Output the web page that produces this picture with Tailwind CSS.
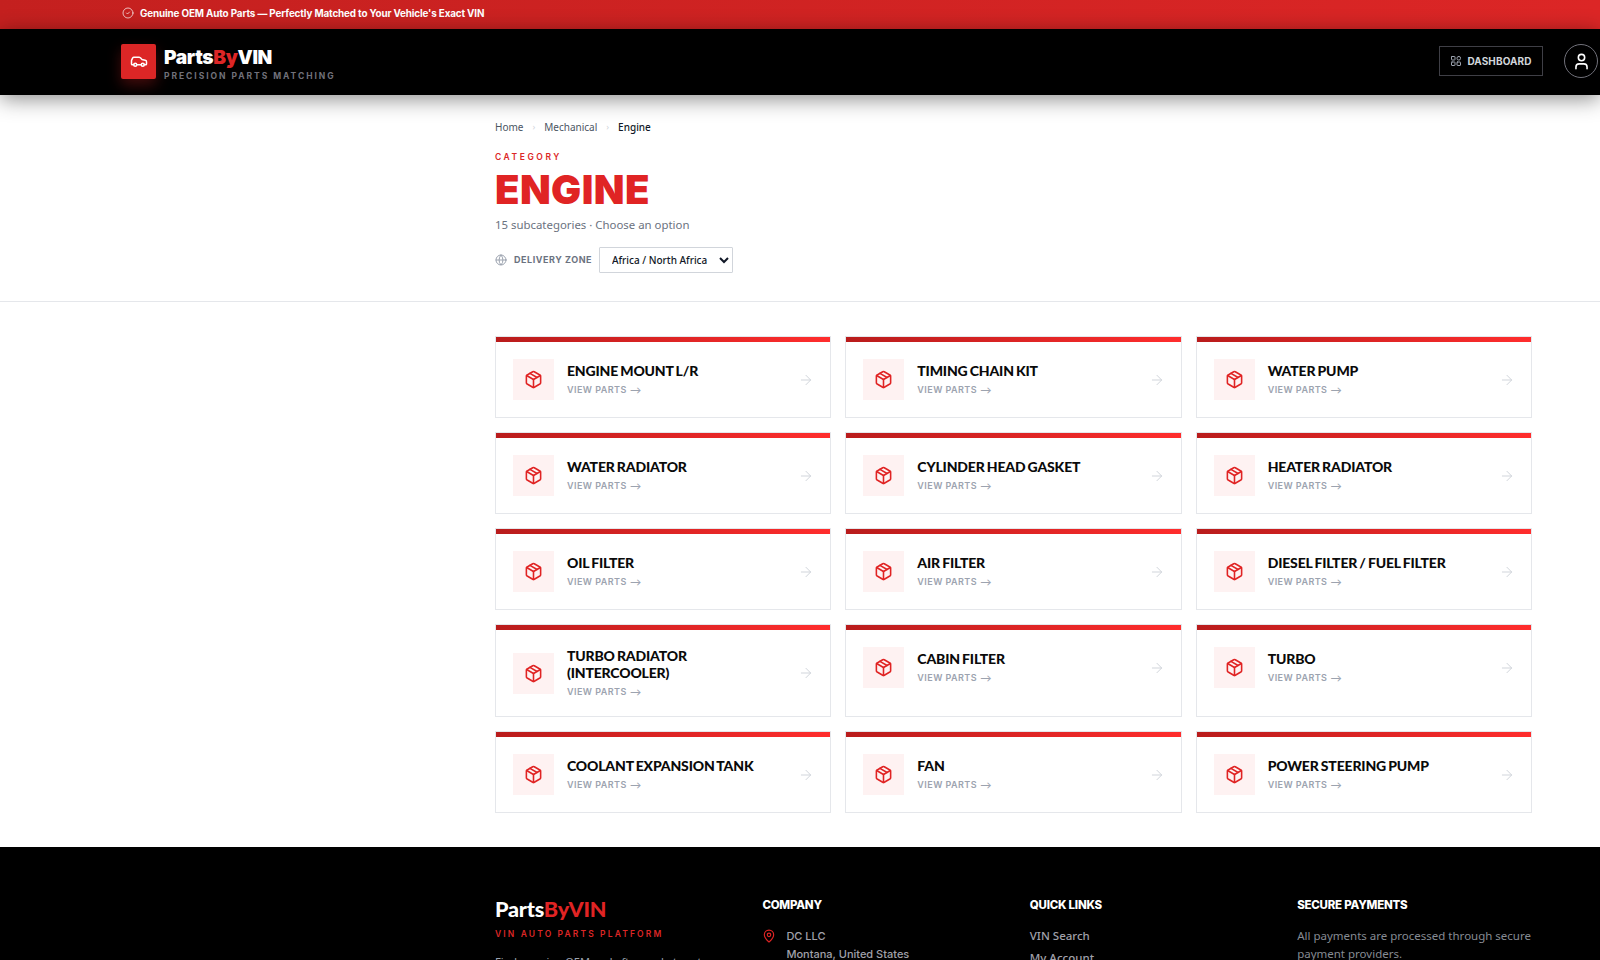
<!doctype html>
<html lang="en">
<head>
<meta charset="utf-8">
<title>Engine - PartsByVIN</title>
<script src="https://cdn.jsdelivr.net/npm/@tailwindcss/browser@4"></script>
</head>
<body class="h-[960px] overflow-hidden bg-white font-['Noto_Sans',sans-serif]">
<div class="flex h-[29px] items-center gap-[6px] bg-gradient-to-r from-[#c4201f] to-[#dc2626] pb-[3px] pl-[122px] text-white">
  <svg class="size-[12px] text-white/70" viewBox="0 0 24 24" fill="none" stroke="currentColor" stroke-width="2" stroke-linecap="round" stroke-linejoin="round"><circle cx="12" cy="12" r="10"/><path d="m9 12 2 2 4-4"/></svg>
  <span class="font-['Inter',sans-serif] text-[9.9px] font-bold tracking-[-0.015em]">Genuine OEM Auto Parts — Perfectly Matched to Your Vehicle's Exact VIN</span>
</div>
<header class="relative z-10 flex h-[66px] items-center justify-between bg-black pl-[121px] pr-[2px] shadow-[0_4px_20px_rgba(0,0,0,0.45)]">
  <div class="flex items-center gap-[8px]">
    <div class="mb-[2px] flex size-[35px] items-center justify-center rounded-[2px] bg-[#dc2626] shadow-[0_6px_14px_rgba(220,38,38,0.3)]">
      <svg class="size-[18px] text-white" viewBox="0 0 24 24" fill="none" stroke="currentColor" stroke-width="2" stroke-linecap="round" stroke-linejoin="round"><path d="M19 17h2c.6 0 1-.4 1-1v-3c0-.9-.7-1.7-1.5-1.9C18.7 10.6 16 10 16 10s-1.3-1.4-2.2-2.3c-.5-.4-1.1-.7-1.8-.7H5c-.6 0-1.1.4-1.4.9l-1.4 2.9A3.7 3.7 0 0 0 2 12v4c0 .6.4 1 1 1h2"/><circle cx="7" cy="17" r="2"/><path d="M9 17h6"/><circle cx="17" cy="17" r="2"/></svg>
    </div>
    <div class="flex flex-col pt-[2px]">
      <div class="font-['Inter',sans-serif] text-[19.2px] leading-[24px] font-black tracking-[-0.02em] text-white">Parts<span class="text-[#dc2626]">By</span>VIN</div>
      <div class="mt-[2px] font-['Inter',sans-serif] text-[8.5px] leading-[11px] font-bold tracking-[0.23em] text-[#71717a]">PRECISION PARTS MATCHING</div>
    </div>
  </div>
  <div class="mb-[2px] flex items-center gap-[21px]">
    <button class="flex h-[30px] w-[104px] items-center justify-center gap-[5px] border border-[#3f3f46] text-[#d1d5db]">
      <svg class="size-[12px] text-[#9ca3af]" viewBox="0 0 24 24" fill="none" stroke="currentColor" stroke-width="2" stroke-linecap="round" stroke-linejoin="round"><rect x="3" y="3" width="7" height="7" rx="1"/><rect x="14" y="3" width="7" height="7" rx="3"/><rect x="14" y="14" width="7" height="7" rx="1"/><rect x="3" y="14" width="7" height="7" rx="1"/></svg>
      <span class="font-['Inter',sans-serif] text-[10px] font-bold tracking-[0.01em]">DASHBOARD</span>
    </button>
    <div class="flex size-[34px] items-center justify-center rounded-full border border-[#71717a] text-white">
      <svg class="size-[19px]" viewBox="0 0 24 24" fill="none" stroke="currentColor" stroke-width="2" stroke-linecap="round" stroke-linejoin="round"><path d="M19 21v-2a4 4 0 0 0-4-4H9a4 4 0 0 0-4 4v2"/><circle cx="12" cy="7" r="4"/></svg>
    </div>
  </div>
</header>
<section class="h-[207px] border-b border-[#e5e7eb] pt-[25px] pl-[495px]">
  <nav class="flex h-[14px] items-center text-[10px] leading-[14px] text-[#4b5563]">
    <span>Home</span><span class="mx-[9px] text-[9px] text-[#d1d5db]">›</span><span>Mechanical</span><span class="mx-[9px] text-[9px] text-[#d1d5db]">›</span><span class="font-medium text-[#111827]">Engine</span>
  </nav>
  <div class="mt-[18px] font-['Inter',sans-serif] text-[8.5px] leading-[11px] font-semibold tracking-[0.3em] text-[#dc2626]">CATEGORY</div>
  <h1 class="mt-[3px] font-['Inter',sans-serif] text-[40px] leading-[48px] font-black tracking-[0.01em] text-[#e02424]">ENGINE</h1>
  <p class="mt-[3px] text-[11.4px] leading-[16px] text-[#6b7280]">15 subcategories · Choose an option</p>
  <div class="mt-[14px] flex h-[26px] items-center">
    <svg class="size-[12px] text-[#9ca3af]" viewBox="0 0 24 24" fill="none" stroke="currentColor" stroke-width="2" stroke-linecap="round" stroke-linejoin="round"><circle cx="12" cy="12" r="10"/><path d="M12 2a14.5 14.5 0 0 0 0 20 14.5 14.5 0 0 0 0-20"/><path d="M2 12h20"/></svg>
    <span class="ml-[7px] w-[85px] font-['Inter',sans-serif] text-[9px] font-bold tracking-[0.06em] text-[#6b7280]">DELIVERY ZONE</span>
    <select class="h-[26px] w-[134px] rounded-[1px] border border-[#d1d5db] bg-white pl-[8px] text-[10px] font-medium text-[#111827]"><option>Africa / North Africa</option></select>
  </div>
</section>
<main class="grid grid-cols-3 gap-[14px] pt-[34px] pb-[34px] pl-[495px] pr-[68px]">
  <a class="block border border-[#e5e7eb] bg-white"><div class="h-[5px] bg-gradient-to-r from-[#b91c1c] to-[#ff2d2d]"></div><div class="flex items-center gap-[13px] py-[17px] pl-[17px] pr-[16px]"><div class="flex size-[41px] shrink-0 items-center justify-center bg-[#fef2f2]"><svg class="size-[19px] text-[#e02424]" viewBox="0 0 24 24" fill="none" stroke="currentColor" stroke-width="2" stroke-linecap="round" stroke-linejoin="round"><path d="M11 21.73a2 2 0 0 0 2 0l7-4A2 2 0 0 0 21 16V8a2 2 0 0 0-1-1.73l-7-4a2 2 0 0 0-2 0l-7 4A2 2 0 0 0 3 8v8a2 2 0 0 0 1 1.73z"/><path d="M12 22V12"/><path d="m3.3 7 8.7 5 8.7-5"/><path d="m7.5 4.27 9 5.15"/></svg></div><div class="min-w-0 flex-1"><div class="font-['Lato',sans-serif] text-[14px] leading-[17px] font-black tracking-[-0.012em] [word-spacing:-1px] text-[#0a0a0a]">ENGINE MOUNT L/R</div><div class="mt-[4px] font-['Inter',sans-serif] text-[9px] leading-[14px] font-semibold tracking-[0.05em] text-[#9ca3af]">VIEW PARTS ⟶</div></div><svg class="size-[16px] shrink-0 text-[#d1d5db]" viewBox="0 0 24 24" fill="none" stroke="currentColor" stroke-width="1.5" stroke-linecap="round" stroke-linejoin="round"><path d="M5 12h14"/><path d="m12 5 7 7-7 7"/></svg></div></a>
  <a class="block border border-[#e5e7eb] bg-white"><div class="h-[5px] bg-gradient-to-r from-[#b91c1c] to-[#ff2d2d]"></div><div class="flex items-center gap-[13px] py-[17px] pl-[17px] pr-[16px]"><div class="flex size-[41px] shrink-0 items-center justify-center bg-[#fef2f2]"><svg class="size-[19px] text-[#e02424]" viewBox="0 0 24 24" fill="none" stroke="currentColor" stroke-width="2" stroke-linecap="round" stroke-linejoin="round"><path d="M11 21.73a2 2 0 0 0 2 0l7-4A2 2 0 0 0 21 16V8a2 2 0 0 0-1-1.73l-7-4a2 2 0 0 0-2 0l-7 4A2 2 0 0 0 3 8v8a2 2 0 0 0 1 1.73z"/><path d="M12 22V12"/><path d="m3.3 7 8.7 5 8.7-5"/><path d="m7.5 4.27 9 5.15"/></svg></div><div class="min-w-0 flex-1"><div class="font-['Lato',sans-serif] text-[14px] leading-[17px] font-black tracking-[-0.012em] [word-spacing:-1px] text-[#0a0a0a]">TIMING CHAIN KIT</div><div class="mt-[4px] font-['Inter',sans-serif] text-[9px] leading-[14px] font-semibold tracking-[0.05em] text-[#9ca3af]">VIEW PARTS ⟶</div></div><svg class="size-[16px] shrink-0 text-[#d1d5db]" viewBox="0 0 24 24" fill="none" stroke="currentColor" stroke-width="1.5" stroke-linecap="round" stroke-linejoin="round"><path d="M5 12h14"/><path d="m12 5 7 7-7 7"/></svg></div></a>
  <a class="block border border-[#e5e7eb] bg-white"><div class="h-[5px] bg-gradient-to-r from-[#b91c1c] to-[#ff2d2d]"></div><div class="flex items-center gap-[13px] py-[17px] pl-[17px] pr-[16px]"><div class="flex size-[41px] shrink-0 items-center justify-center bg-[#fef2f2]"><svg class="size-[19px] text-[#e02424]" viewBox="0 0 24 24" fill="none" stroke="currentColor" stroke-width="2" stroke-linecap="round" stroke-linejoin="round"><path d="M11 21.73a2 2 0 0 0 2 0l7-4A2 2 0 0 0 21 16V8a2 2 0 0 0-1-1.73l-7-4a2 2 0 0 0-2 0l-7 4A2 2 0 0 0 3 8v8a2 2 0 0 0 1 1.73z"/><path d="M12 22V12"/><path d="m3.3 7 8.7 5 8.7-5"/><path d="m7.5 4.27 9 5.15"/></svg></div><div class="min-w-0 flex-1"><div class="font-['Lato',sans-serif] text-[14px] leading-[17px] font-black tracking-[-0.012em] [word-spacing:-1px] text-[#0a0a0a]">WATER PUMP</div><div class="mt-[4px] font-['Inter',sans-serif] text-[9px] leading-[14px] font-semibold tracking-[0.05em] text-[#9ca3af]">VIEW PARTS ⟶</div></div><svg class="size-[16px] shrink-0 text-[#d1d5db]" viewBox="0 0 24 24" fill="none" stroke="currentColor" stroke-width="1.5" stroke-linecap="round" stroke-linejoin="round"><path d="M5 12h14"/><path d="m12 5 7 7-7 7"/></svg></div></a>
  <a class="block border border-[#e5e7eb] bg-white"><div class="h-[5px] bg-gradient-to-r from-[#b91c1c] to-[#ff2d2d]"></div><div class="flex items-center gap-[13px] py-[17px] pl-[17px] pr-[16px]"><div class="flex size-[41px] shrink-0 items-center justify-center bg-[#fef2f2]"><svg class="size-[19px] text-[#e02424]" viewBox="0 0 24 24" fill="none" stroke="currentColor" stroke-width="2" stroke-linecap="round" stroke-linejoin="round"><path d="M11 21.73a2 2 0 0 0 2 0l7-4A2 2 0 0 0 21 16V8a2 2 0 0 0-1-1.73l-7-4a2 2 0 0 0-2 0l-7 4A2 2 0 0 0 3 8v8a2 2 0 0 0 1 1.73z"/><path d="M12 22V12"/><path d="m3.3 7 8.7 5 8.7-5"/><path d="m7.5 4.27 9 5.15"/></svg></div><div class="min-w-0 flex-1"><div class="font-['Lato',sans-serif] text-[14px] leading-[17px] font-black tracking-[-0.012em] [word-spacing:-1px] text-[#0a0a0a]">WATER RADIATOR</div><div class="mt-[4px] font-['Inter',sans-serif] text-[9px] leading-[14px] font-semibold tracking-[0.05em] text-[#9ca3af]">VIEW PARTS ⟶</div></div><svg class="size-[16px] shrink-0 text-[#d1d5db]" viewBox="0 0 24 24" fill="none" stroke="currentColor" stroke-width="1.5" stroke-linecap="round" stroke-linejoin="round"><path d="M5 12h14"/><path d="m12 5 7 7-7 7"/></svg></div></a>
  <a class="block border border-[#e5e7eb] bg-white"><div class="h-[5px] bg-gradient-to-r from-[#b91c1c] to-[#ff2d2d]"></div><div class="flex items-center gap-[13px] py-[17px] pl-[17px] pr-[16px]"><div class="flex size-[41px] shrink-0 items-center justify-center bg-[#fef2f2]"><svg class="size-[19px] text-[#e02424]" viewBox="0 0 24 24" fill="none" stroke="currentColor" stroke-width="2" stroke-linecap="round" stroke-linejoin="round"><path d="M11 21.73a2 2 0 0 0 2 0l7-4A2 2 0 0 0 21 16V8a2 2 0 0 0-1-1.73l-7-4a2 2 0 0 0-2 0l-7 4A2 2 0 0 0 3 8v8a2 2 0 0 0 1 1.73z"/><path d="M12 22V12"/><path d="m3.3 7 8.7 5 8.7-5"/><path d="m7.5 4.27 9 5.15"/></svg></div><div class="min-w-0 flex-1"><div class="font-['Lato',sans-serif] text-[14px] leading-[17px] font-black tracking-[-0.012em] [word-spacing:-1px] text-[#0a0a0a]">CYLINDER HEAD GASKET</div><div class="mt-[4px] font-['Inter',sans-serif] text-[9px] leading-[14px] font-semibold tracking-[0.05em] text-[#9ca3af]">VIEW PARTS ⟶</div></div><svg class="size-[16px] shrink-0 text-[#d1d5db]" viewBox="0 0 24 24" fill="none" stroke="currentColor" stroke-width="1.5" stroke-linecap="round" stroke-linejoin="round"><path d="M5 12h14"/><path d="m12 5 7 7-7 7"/></svg></div></a>
  <a class="block border border-[#e5e7eb] bg-white"><div class="h-[5px] bg-gradient-to-r from-[#b91c1c] to-[#ff2d2d]"></div><div class="flex items-center gap-[13px] py-[17px] pl-[17px] pr-[16px]"><div class="flex size-[41px] shrink-0 items-center justify-center bg-[#fef2f2]"><svg class="size-[19px] text-[#e02424]" viewBox="0 0 24 24" fill="none" stroke="currentColor" stroke-width="2" stroke-linecap="round" stroke-linejoin="round"><path d="M11 21.73a2 2 0 0 0 2 0l7-4A2 2 0 0 0 21 16V8a2 2 0 0 0-1-1.73l-7-4a2 2 0 0 0-2 0l-7 4A2 2 0 0 0 3 8v8a2 2 0 0 0 1 1.73z"/><path d="M12 22V12"/><path d="m3.3 7 8.7 5 8.7-5"/><path d="m7.5 4.27 9 5.15"/></svg></div><div class="min-w-0 flex-1"><div class="font-['Lato',sans-serif] text-[14px] leading-[17px] font-black tracking-[-0.012em] [word-spacing:-1px] text-[#0a0a0a]">HEATER RADIATOR</div><div class="mt-[4px] font-['Inter',sans-serif] text-[9px] leading-[14px] font-semibold tracking-[0.05em] text-[#9ca3af]">VIEW PARTS ⟶</div></div><svg class="size-[16px] shrink-0 text-[#d1d5db]" viewBox="0 0 24 24" fill="none" stroke="currentColor" stroke-width="1.5" stroke-linecap="round" stroke-linejoin="round"><path d="M5 12h14"/><path d="m12 5 7 7-7 7"/></svg></div></a>
  <a class="block border border-[#e5e7eb] bg-white"><div class="h-[5px] bg-gradient-to-r from-[#b91c1c] to-[#ff2d2d]"></div><div class="flex items-center gap-[13px] py-[17px] pl-[17px] pr-[16px]"><div class="flex size-[41px] shrink-0 items-center justify-center bg-[#fef2f2]"><svg class="size-[19px] text-[#e02424]" viewBox="0 0 24 24" fill="none" stroke="currentColor" stroke-width="2" stroke-linecap="round" stroke-linejoin="round"><path d="M11 21.73a2 2 0 0 0 2 0l7-4A2 2 0 0 0 21 16V8a2 2 0 0 0-1-1.73l-7-4a2 2 0 0 0-2 0l-7 4A2 2 0 0 0 3 8v8a2 2 0 0 0 1 1.73z"/><path d="M12 22V12"/><path d="m3.3 7 8.7 5 8.7-5"/><path d="m7.5 4.27 9 5.15"/></svg></div><div class="min-w-0 flex-1"><div class="font-['Lato',sans-serif] text-[14px] leading-[17px] font-black tracking-[-0.012em] [word-spacing:-1px] text-[#0a0a0a]">OIL FILTER</div><div class="mt-[4px] font-['Inter',sans-serif] text-[9px] leading-[14px] font-semibold tracking-[0.05em] text-[#9ca3af]">VIEW PARTS ⟶</div></div><svg class="size-[16px] shrink-0 text-[#d1d5db]" viewBox="0 0 24 24" fill="none" stroke="currentColor" stroke-width="1.5" stroke-linecap="round" stroke-linejoin="round"><path d="M5 12h14"/><path d="m12 5 7 7-7 7"/></svg></div></a>
  <a class="block border border-[#e5e7eb] bg-white"><div class="h-[5px] bg-gradient-to-r from-[#b91c1c] to-[#ff2d2d]"></div><div class="flex items-center gap-[13px] py-[17px] pl-[17px] pr-[16px]"><div class="flex size-[41px] shrink-0 items-center justify-center bg-[#fef2f2]"><svg class="size-[19px] text-[#e02424]" viewBox="0 0 24 24" fill="none" stroke="currentColor" stroke-width="2" stroke-linecap="round" stroke-linejoin="round"><path d="M11 21.73a2 2 0 0 0 2 0l7-4A2 2 0 0 0 21 16V8a2 2 0 0 0-1-1.73l-7-4a2 2 0 0 0-2 0l-7 4A2 2 0 0 0 3 8v8a2 2 0 0 0 1 1.73z"/><path d="M12 22V12"/><path d="m3.3 7 8.7 5 8.7-5"/><path d="m7.5 4.27 9 5.15"/></svg></div><div class="min-w-0 flex-1"><div class="font-['Lato',sans-serif] text-[14px] leading-[17px] font-black tracking-[-0.012em] [word-spacing:-1px] text-[#0a0a0a]">AIR FILTER</div><div class="mt-[4px] font-['Inter',sans-serif] text-[9px] leading-[14px] font-semibold tracking-[0.05em] text-[#9ca3af]">VIEW PARTS ⟶</div></div><svg class="size-[16px] shrink-0 text-[#d1d5db]" viewBox="0 0 24 24" fill="none" stroke="currentColor" stroke-width="1.5" stroke-linecap="round" stroke-linejoin="round"><path d="M5 12h14"/><path d="m12 5 7 7-7 7"/></svg></div></a>
  <a class="block border border-[#e5e7eb] bg-white"><div class="h-[5px] bg-gradient-to-r from-[#b91c1c] to-[#ff2d2d]"></div><div class="flex items-center gap-[13px] py-[17px] pl-[17px] pr-[16px]"><div class="flex size-[41px] shrink-0 items-center justify-center bg-[#fef2f2]"><svg class="size-[19px] text-[#e02424]" viewBox="0 0 24 24" fill="none" stroke="currentColor" stroke-width="2" stroke-linecap="round" stroke-linejoin="round"><path d="M11 21.73a2 2 0 0 0 2 0l7-4A2 2 0 0 0 21 16V8a2 2 0 0 0-1-1.73l-7-4a2 2 0 0 0-2 0l-7 4A2 2 0 0 0 3 8v8a2 2 0 0 0 1 1.73z"/><path d="M12 22V12"/><path d="m3.3 7 8.7 5 8.7-5"/><path d="m7.5 4.27 9 5.15"/></svg></div><div class="min-w-0 flex-1"><div class="font-['Lato',sans-serif] text-[14px] leading-[17px] font-black tracking-[-0.012em] [word-spacing:-1px] text-[#0a0a0a]">DIESEL FILTER / FUEL FILTER</div><div class="mt-[4px] font-['Inter',sans-serif] text-[9px] leading-[14px] font-semibold tracking-[0.05em] text-[#9ca3af]">VIEW PARTS ⟶</div></div><svg class="size-[16px] shrink-0 text-[#d1d5db]" viewBox="0 0 24 24" fill="none" stroke="currentColor" stroke-width="1.5" stroke-linecap="round" stroke-linejoin="round"><path d="M5 12h14"/><path d="m12 5 7 7-7 7"/></svg></div></a>
  <a class="block border border-[#e5e7eb] bg-white"><div class="h-[5px] bg-gradient-to-r from-[#b91c1c] to-[#ff2d2d]"></div><div class="flex items-center gap-[13px] py-[17px] pl-[17px] pr-[16px]"><div class="flex size-[41px] shrink-0 items-center justify-center bg-[#fef2f2]"><svg class="size-[19px] text-[#e02424]" viewBox="0 0 24 24" fill="none" stroke="currentColor" stroke-width="2" stroke-linecap="round" stroke-linejoin="round"><path d="M11 21.73a2 2 0 0 0 2 0l7-4A2 2 0 0 0 21 16V8a2 2 0 0 0-1-1.73l-7-4a2 2 0 0 0-2 0l-7 4A2 2 0 0 0 3 8v8a2 2 0 0 0 1 1.73z"/><path d="M12 22V12"/><path d="m3.3 7 8.7 5 8.7-5"/><path d="m7.5 4.27 9 5.15"/></svg></div><div class="min-w-0 flex-1"><div class="font-['Lato',sans-serif] text-[14px] leading-[17px] font-black tracking-[-0.012em] [word-spacing:-1px] text-[#0a0a0a]">TURBO RADIATOR<br>(INTERCOOLER)</div><div class="mt-[4px] font-['Inter',sans-serif] text-[9px] leading-[14px] font-semibold tracking-[0.05em] text-[#9ca3af]">VIEW PARTS ⟶</div></div><svg class="size-[16px] shrink-0 text-[#d1d5db]" viewBox="0 0 24 24" fill="none" stroke="currentColor" stroke-width="1.5" stroke-linecap="round" stroke-linejoin="round"><path d="M5 12h14"/><path d="m12 5 7 7-7 7"/></svg></div></a>
  <a class="block border border-[#e5e7eb] bg-white"><div class="h-[5px] bg-gradient-to-r from-[#b91c1c] to-[#ff2d2d]"></div><div class="flex items-center gap-[13px] py-[17px] pl-[17px] pr-[16px]"><div class="flex size-[41px] shrink-0 items-center justify-center bg-[#fef2f2]"><svg class="size-[19px] text-[#e02424]" viewBox="0 0 24 24" fill="none" stroke="currentColor" stroke-width="2" stroke-linecap="round" stroke-linejoin="round"><path d="M11 21.73a2 2 0 0 0 2 0l7-4A2 2 0 0 0 21 16V8a2 2 0 0 0-1-1.73l-7-4a2 2 0 0 0-2 0l-7 4A2 2 0 0 0 3 8v8a2 2 0 0 0 1 1.73z"/><path d="M12 22V12"/><path d="m3.3 7 8.7 5 8.7-5"/><path d="m7.5 4.27 9 5.15"/></svg></div><div class="min-w-0 flex-1"><div class="font-['Lato',sans-serif] text-[14px] leading-[17px] font-black tracking-[-0.012em] [word-spacing:-1px] text-[#0a0a0a]">CABIN FILTER</div><div class="mt-[4px] font-['Inter',sans-serif] text-[9px] leading-[14px] font-semibold tracking-[0.05em] text-[#9ca3af]">VIEW PARTS ⟶</div></div><svg class="size-[16px] shrink-0 text-[#d1d5db]" viewBox="0 0 24 24" fill="none" stroke="currentColor" stroke-width="1.5" stroke-linecap="round" stroke-linejoin="round"><path d="M5 12h14"/><path d="m12 5 7 7-7 7"/></svg></div></a>
  <a class="block border border-[#e5e7eb] bg-white"><div class="h-[5px] bg-gradient-to-r from-[#b91c1c] to-[#ff2d2d]"></div><div class="flex items-center gap-[13px] py-[17px] pl-[17px] pr-[16px]"><div class="flex size-[41px] shrink-0 items-center justify-center bg-[#fef2f2]"><svg class="size-[19px] text-[#e02424]" viewBox="0 0 24 24" fill="none" stroke="currentColor" stroke-width="2" stroke-linecap="round" stroke-linejoin="round"><path d="M11 21.73a2 2 0 0 0 2 0l7-4A2 2 0 0 0 21 16V8a2 2 0 0 0-1-1.73l-7-4a2 2 0 0 0-2 0l-7 4A2 2 0 0 0 3 8v8a2 2 0 0 0 1 1.73z"/><path d="M12 22V12"/><path d="m3.3 7 8.7 5 8.7-5"/><path d="m7.5 4.27 9 5.15"/></svg></div><div class="min-w-0 flex-1"><div class="font-['Lato',sans-serif] text-[14px] leading-[17px] font-black tracking-[-0.012em] [word-spacing:-1px] text-[#0a0a0a]">TURBO</div><div class="mt-[4px] font-['Inter',sans-serif] text-[9px] leading-[14px] font-semibold tracking-[0.05em] text-[#9ca3af]">VIEW PARTS ⟶</div></div><svg class="size-[16px] shrink-0 text-[#d1d5db]" viewBox="0 0 24 24" fill="none" stroke="currentColor" stroke-width="1.5" stroke-linecap="round" stroke-linejoin="round"><path d="M5 12h14"/><path d="m12 5 7 7-7 7"/></svg></div></a>
  <a class="block border border-[#e5e7eb] bg-white"><div class="h-[5px] bg-gradient-to-r from-[#b91c1c] to-[#ff2d2d]"></div><div class="flex items-center gap-[13px] py-[17px] pl-[17px] pr-[16px]"><div class="flex size-[41px] shrink-0 items-center justify-center bg-[#fef2f2]"><svg class="size-[19px] text-[#e02424]" viewBox="0 0 24 24" fill="none" stroke="currentColor" stroke-width="2" stroke-linecap="round" stroke-linejoin="round"><path d="M11 21.73a2 2 0 0 0 2 0l7-4A2 2 0 0 0 21 16V8a2 2 0 0 0-1-1.73l-7-4a2 2 0 0 0-2 0l-7 4A2 2 0 0 0 3 8v8a2 2 0 0 0 1 1.73z"/><path d="M12 22V12"/><path d="m3.3 7 8.7 5 8.7-5"/><path d="m7.5 4.27 9 5.15"/></svg></div><div class="min-w-0 flex-1"><div class="font-['Lato',sans-serif] text-[14px] leading-[17px] font-black tracking-[-0.012em] [word-spacing:-1px] text-[#0a0a0a]">COOLANT EXPANSION TANK</div><div class="mt-[4px] font-['Inter',sans-serif] text-[9px] leading-[14px] font-semibold tracking-[0.05em] text-[#9ca3af]">VIEW PARTS ⟶</div></div><svg class="size-[16px] shrink-0 text-[#d1d5db]" viewBox="0 0 24 24" fill="none" stroke="currentColor" stroke-width="1.5" stroke-linecap="round" stroke-linejoin="round"><path d="M5 12h14"/><path d="m12 5 7 7-7 7"/></svg></div></a>
  <a class="block border border-[#e5e7eb] bg-white"><div class="h-[5px] bg-gradient-to-r from-[#b91c1c] to-[#ff2d2d]"></div><div class="flex items-center gap-[13px] py-[17px] pl-[17px] pr-[16px]"><div class="flex size-[41px] shrink-0 items-center justify-center bg-[#fef2f2]"><svg class="size-[19px] text-[#e02424]" viewBox="0 0 24 24" fill="none" stroke="currentColor" stroke-width="2" stroke-linecap="round" stroke-linejoin="round"><path d="M11 21.73a2 2 0 0 0 2 0l7-4A2 2 0 0 0 21 16V8a2 2 0 0 0-1-1.73l-7-4a2 2 0 0 0-2 0l-7 4A2 2 0 0 0 3 8v8a2 2 0 0 0 1 1.73z"/><path d="M12 22V12"/><path d="m3.3 7 8.7 5 8.7-5"/><path d="m7.5 4.27 9 5.15"/></svg></div><div class="min-w-0 flex-1"><div class="font-['Lato',sans-serif] text-[14px] leading-[17px] font-black tracking-[-0.012em] [word-spacing:-1px] text-[#0a0a0a]">FAN</div><div class="mt-[4px] font-['Inter',sans-serif] text-[9px] leading-[14px] font-semibold tracking-[0.05em] text-[#9ca3af]">VIEW PARTS ⟶</div></div><svg class="size-[16px] shrink-0 text-[#d1d5db]" viewBox="0 0 24 24" fill="none" stroke="currentColor" stroke-width="1.5" stroke-linecap="round" stroke-linejoin="round"><path d="M5 12h14"/><path d="m12 5 7 7-7 7"/></svg></div></a>
  <a class="block border border-[#e5e7eb] bg-white"><div class="h-[5px] bg-gradient-to-r from-[#b91c1c] to-[#ff2d2d]"></div><div class="flex items-center gap-[13px] py-[17px] pl-[17px] pr-[16px]"><div class="flex size-[41px] shrink-0 items-center justify-center bg-[#fef2f2]"><svg class="size-[19px] text-[#e02424]" viewBox="0 0 24 24" fill="none" stroke="currentColor" stroke-width="2" stroke-linecap="round" stroke-linejoin="round"><path d="M11 21.73a2 2 0 0 0 2 0l7-4A2 2 0 0 0 21 16V8a2 2 0 0 0-1-1.73l-7-4a2 2 0 0 0-2 0l-7 4A2 2 0 0 0 3 8v8a2 2 0 0 0 1 1.73z"/><path d="M12 22V12"/><path d="m3.3 7 8.7 5 8.7-5"/><path d="m7.5 4.27 9 5.15"/></svg></div><div class="min-w-0 flex-1"><div class="font-['Lato',sans-serif] text-[14px] leading-[17px] font-black tracking-[-0.012em] [word-spacing:-1px] text-[#0a0a0a]">POWER STEERING PUMP</div><div class="mt-[4px] font-['Inter',sans-serif] text-[9px] leading-[14px] font-semibold tracking-[0.05em] text-[#9ca3af]">VIEW PARTS ⟶</div></div><svg class="size-[16px] shrink-0 text-[#d1d5db]" viewBox="0 0 24 24" fill="none" stroke="currentColor" stroke-width="1.5" stroke-linecap="round" stroke-linejoin="round"><path d="M5 12h14"/><path d="m12 5 7 7-7 7"/></svg></div></a>
</main>
<footer class="grid grid-cols-4 gap-x-[32.5px] bg-black pt-[50px] pb-[40px] pl-[495px] pr-[68px]">
  <div>
    <div class="font-['Lato',sans-serif] text-[21.6px] leading-[24px] font-black tracking-[-0.01em] text-white">Parts<span class="text-[#e02424]">ByVIN</span></div>
    <div class="mt-[7px] font-['Inter',sans-serif] text-[8.5px] leading-[12px] font-semibold tracking-[0.25em] text-[#dc2626]">VIN AUTO PARTS PLATFORM</div>
    <p class="mt-[13px] text-[11px] leading-[18px] text-[#9ca3af]">Find genuine OEM and aftermarket parts matched to your VIN.</p>
  </div>
  <div>
    <div class="pt-[1px] font-['Inter',sans-serif] text-[11.5px] leading-[14px] font-extrabold tracking-[-0.02em] text-white">COMPANY</div>
    <div class="mt-[15px] flex gap-[10px]">
      <svg class="mt-[2px] size-[14px] shrink-0 text-[#e02424]" viewBox="0 0 24 24" fill="none" stroke="currentColor" stroke-width="2" stroke-linecap="round" stroke-linejoin="round"><path d="M20 10c0 4.993-5.539 10.193-7.399 11.799a1 1 0 0 1-1.202 0C9.539 20.193 4 14.993 4 10a8 8 0 0 1 16 0"/><circle cx="12" cy="10" r="3"/></svg>
      <div class="font-['Inter',sans-serif] text-[11px] leading-[18px] font-medium text-[#a1a1aa]">DC LLC<br>Montana, United States</div>
    </div>
  </div>
  <div>
    <div class="pt-[1px] font-['Inter',sans-serif] text-[11.5px] leading-[14px] font-extrabold tracking-[-0.02em] text-white">QUICK LINKS</div>
    <div class="mt-[15px] text-[11.5px] leading-[18px] font-medium text-[#a1a1aa]">VIN Search</div>
    <div class="mt-[4px] text-[11.5px] leading-[18px] font-medium text-[#a1a1aa]">My Account</div>
  </div>
  <div>
    <div class="pt-[1px] font-['Inter',sans-serif] text-[11.5px] leading-[14px] font-extrabold tracking-[-0.02em] text-white">SECURE PAYMENTS</div>
    <p class="mt-[15px] text-[11.5px] leading-[18px] text-[#868b93]">All payments are processed through secure payment providers.</p>
  </div>
</footer>
</body>
</html>
